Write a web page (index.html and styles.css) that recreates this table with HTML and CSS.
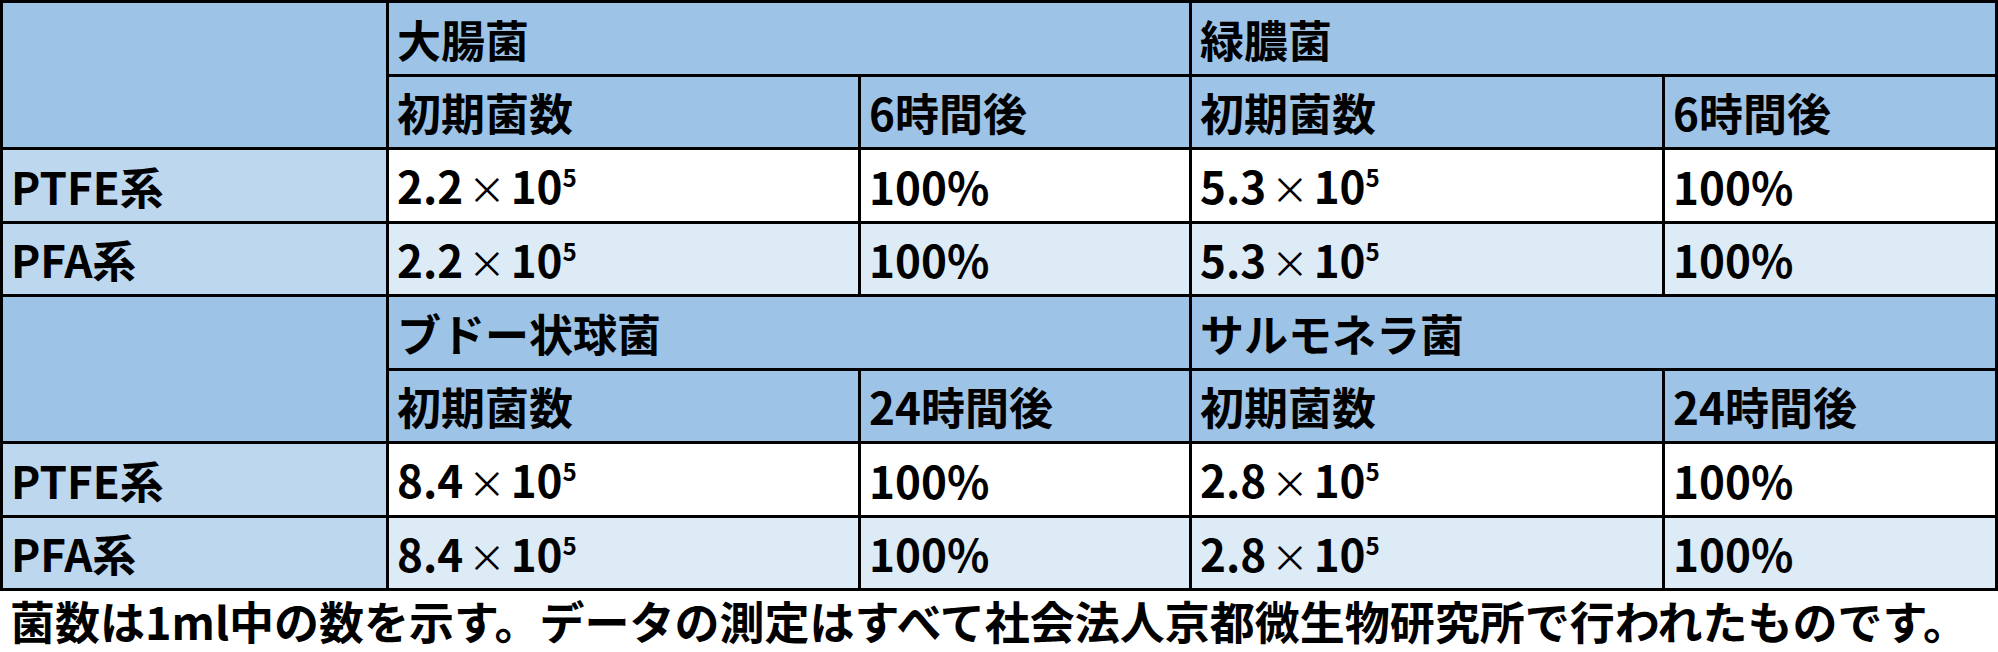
FILE: index.html
```html
<!DOCTYPE html>
<html lang="ja">
<head>
<meta charset="utf-8">
<title>抗菌試験結果</title>
<link rel="stylesheet" href="styles.css">
</head>
<body>
<table class="results">
  <colgroup>
    <col class="c-label">
    <col class="c-init">
    <col class="c-after">
    <col class="c-init2">
    <col class="c-after2">
  </colgroup>
  <tbody>
    <tr class="row-a">
      <td class="head" rowspan="2"></td>
      <td class="head" colspan="2">大腸菌</td>
      <td class="head" colspan="2">緑膿菌</td>
    </tr>
    <tr class="row-b">
      <td class="head">初期菌数</td>
      <td class="head">6時間後</td>
      <td class="head">初期菌数</td>
      <td class="head">6時間後</td>
    </tr>
    <tr class="row-a">
      <td class="label">PTFE系</td>
      <td class="white">2.2<span class="x">×</span>10<sup>5</sup></td>
      <td class="white">100%</td>
      <td class="white">5.3<span class="x">×</span>10<sup>5</sup></td>
      <td class="white">100%</td>
    </tr>
    <tr class="row-b">
      <td class="label">PFA系</td>
      <td class="pale">2.2<span class="x">×</span>10<sup>5</sup></td>
      <td class="pale">100%</td>
      <td class="pale">5.3<span class="x">×</span>10<sup>5</sup></td>
      <td class="pale">100%</td>
    </tr>
    <tr class="row-a">
      <td class="head" rowspan="2"></td>
      <td class="head" colspan="2">ブドー状球菌</td>
      <td class="head" colspan="2">サルモネラ菌</td>
    </tr>
    <tr class="row-b">
      <td class="head">初期菌数</td>
      <td class="head">24時間後</td>
      <td class="head">初期菌数</td>
      <td class="head">24時間後</td>
    </tr>
    <tr class="row-a">
      <td class="label">PTFE系</td>
      <td class="white">8.4<span class="x">×</span>10<sup>5</sup></td>
      <td class="white">100%</td>
      <td class="white">2.8<span class="x">×</span>10<sup>5</sup></td>
      <td class="white">100%</td>
    </tr>
    <tr class="row-b">
      <td class="label">PFA系</td>
      <td class="pale">8.4<span class="x">×</span>10<sup>5</sup></td>
      <td class="pale">100%</td>
      <td class="pale">2.8<span class="x">×</span>10<sup>5</sup></td>
      <td class="pale">100%</td>
    </tr>
  </tbody>
</table>
<p class="note">菌数は1ml中の数を示す。データの測定はすべて社会法人京都微生物研究所で行われたものです。</p>
</body>
</html>
```

FILE: styles.css
```css
html, body {
  margin: 0;
  padding: 0;
  background: #ffffff;
}

body {
  width: 1998px;
  font-family: "Noto Sans CJK JP", "Noto Sans", sans-serif;
  font-weight: 700;
  color: #000000;
}

.results {
  width: 1998px;
  table-layout: fixed;
  border-collapse: separate;
  border-spacing: 0;
  border-top: 3px solid #000;
  border-left: 3px solid #000;
}

.c-label { width: 386px; }
.c-init { width: 472px; }
.c-after { width: 331px; }
.c-init2 { width: 473px; }
.c-after2 { width: 333px; }

.results td {
  box-sizing: border-box;
  border-right: 3px solid #000;
  border-bottom: 3px solid #000;
  padding: 0 0 0 8px;
  font-size: 44px;
  line-height: 1;
  vertical-align: middle;
  white-space: nowrap;
}

.row-a td { height: 74px; }
.row-b td { height: 73px; }

.results td.head { background: #9dc3e6; }
.results td.label { background: #bdd7ee; }
.results td.white { background: #ffffff; }
.results td.pale { background: #ddebf7; }

.x {
  display: inline-block;
  margin: 0 5px;
  font-size: 0.85em;
  font-weight: 400;
}

sup {
  font-size: 0.55em;
  line-height: 0;
  vertical-align: 0.7em;
}

.note {
  margin: 0;
  padding-left: 10px;
  font-size: 45px;
  line-height: 60px;
  white-space: nowrap;
}
```
